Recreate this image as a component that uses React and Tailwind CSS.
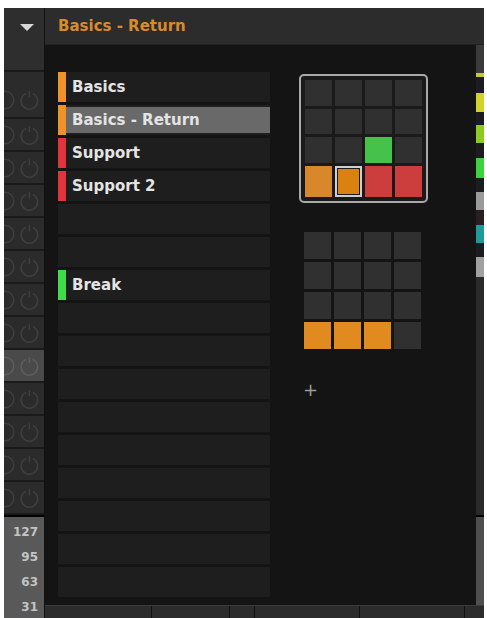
import React from "react";

const font = { fontFamily: '"DejaVu Sans", "Liberation Sans", sans-serif' };

const listRows = [
  { name: "Basics", color: "bg-[#f0922a]" },
  { name: "Basics - Return", color: "bg-[#f0922a]", active: true },
  { name: "Support", color: "bg-[#e0353d]" },
  { name: "Support 2", color: "bg-[#e0353d]" },
  {},
  {},
  { name: "Break", color: "bg-[#3fdc4a]" },
  {},
  {},
  {},
  {},
  {},
  {},
  {},
  {},
  {},
];

const grid1 = [
  "d", "d", "d", "d",
  "d", "d", "d", "d",
  "d", "d", "g", "d",
  "o", "s", "r", "r",
];

const grid2 = [
  "d", "d", "d", "d",
  "d", "d", "d", "d",
  "d", "d", "d", "d",
  "o", "o", "o", "d",
];

const padColor = {
  d: "bg-[#303030]",
  g: "bg-[#46c24b]",
  o: "bg-[#d8872a]",
  r: "bg-[#cc3d3d]",
};

const Knobs = ({ lit }) => {
  const c = lit ? "#5e5e5e" : "#3f3f3f";
  return (
    <svg width="41" height="22" viewBox="0 0 41 22">
      <circle cx="1" cy="11" r="9" fill="none" stroke={c} strokeWidth="1.5" />
      <path d="M22.5 4.2 A8.5 8.5 0 1 0 29.5 4.2" fill="none" stroke={c} strokeWidth="1.5" />
      <line x1="26" y1="2" x2="26" y2="8" stroke={c} strokeWidth="1.5" />
    </svg>
  );
};

const KnobRow = ({ tall, lit }) => (
  <div
    className={`flex ${tall ? "h-[47px] items-end pb-[6px]" : "h-[33px] items-center"} border-b-2 border-[#1a1a1a] ${
      lit ? "bg-[#4a4a4a]" : "bg-[#2b2b2b]"
    }`}
  >
    <Knobs lit={lit} />
  </div>
);

const stripParts = [
  ["h-[28px]", "bg-[#3a3a3a]"],
  ["h-[4px]", "bg-[#c9c82a]"],
  ["h-[16px]", "bg-[#1c1b20]"],
  ["h-[19px]", "bg-[#d2d22a]"],
  ["h-[13px]", "bg-[#1c1b20]"],
  ["h-[18px]", "bg-[#8ccc1e]"],
  ["h-[15px]", "bg-[#1c1b20]"],
  ["h-[20px]", "bg-[#3cd23c]"],
  ["h-[14px]", "bg-[#1c1b20]"],
  ["h-[18px]", "bg-[#9a9a9a]"],
  ["h-[15px]", "bg-[#2a1e20]"],
  ["h-[18px]", "bg-[#1e9a9a]"],
  ["h-[14px]", "bg-[#1c1b20]"],
  ["h-[20px]", "bg-[#a0a0a0]"],
];

export default function App() {
  return (
    <div className="w-[487px] h-[618px] bg-white pt-[8px] pl-[4px] pr-[3px] overflow-hidden" style={font}>
      <div className="flex h-[610px]">
        {/* left column */}
        <div className="w-[41px] flex flex-col border-r border-[#111]">
          <div className="h-[64px] bg-[#2e2e2e] border-b-2 border-[#1a1a1a] flex justify-center pt-[16px]">
            <div className="w-0 h-0 border-l-[7px] border-r-[7px] border-t-[7px] border-l-transparent border-r-transparent border-t-[#d8d8d8] ml-[6px]" />
          </div>
          <KnobRow tall />
          {Array.from({ length: 12 }).map((_, i) => (
            <KnobRow key={i} lit={i === 7} />
          ))}
          <div className="flex-1 bg-[#595959] border-t-2 border-black flex flex-col items-end pr-[6px] pt-[6px] gap-[7px] text-[12px] font-bold text-[#c4c4c4] leading-[18px]">
            <span>127</span>
            <span>95</span>
            <span>63</span>
            <span>31</span>
          </div>
        </div>

        {/* main */}
        <div className="flex-1 flex flex-col">
          <div className="h-[37px] bg-[#2c2c2c] flex items-center pl-[13px] border-b border-[#222]">
            <span className="text-[15px] font-bold text-[#d98a2c]">Basics - Return</span>
          </div>

          <div className="flex h-[560px]">
            <div className="flex-1 bg-[#141414] flex pl-[13px] pt-[27px]">
              {/* list */}
              <div className="w-[212px] flex flex-col">
                {listRows.map((r, i) => (
                  <div key={i} className="h-[33px] flex border-b-[3px] border-[#141414] bg-[#1e1e1e]">
                    <div className={`w-[8px] ${r.color || "bg-[#1e1e1e]"}`} />
                    <div className="flex-1 flex items-center py-[2px]">
                      <div
                        className={`h-full flex-1 flex items-center pl-[6px] text-[15px] font-bold text-[#e4e4e4] ${
                          r.active ? "bg-[#696969]" : ""
                        }`}
                      >
                        {r.name}
                      </div>
                    </div>
                  </div>
                ))}
              </div>

              {/* pads */}
              <div className="flex flex-col pl-[29px] pt-[2px]">
                <div className="w-[129px] h-[129px] border-2 border-[#a9a9a9] rounded-[5px] bg-[#1a1a1a] p-[4px] grid grid-cols-4 gap-[3px]">
                  {grid1.map((c, i) =>
                    c === "s" ? (
                      <div key={i} className="border-2 border-[#cfcfcf] p-[1px] bg-[#1a1a1a]">
                        <div className="w-full h-full bg-[#d9820f]" />
                      </div>
                    ) : (
                      <div key={i} className={padColor[c]} />
                    )
                  )}
                </div>

                <div className="ml-[5px] mt-[29px] w-[117px] h-[117px] grid grid-cols-4 gap-[3px]">
                  {grid2.map((c, i) => (
                    <div key={i} className={c === "o" ? "bg-[#e08a20]" : "bg-[#303030]"} />
                  ))}
                </div>

                <div className="ml-[4px] mt-[32px] text-[18px] leading-[18px] text-[#9a9a9a]">+</div>
              </div>
            </div>

            {/* right strip */}
            <div className="w-[8px] flex flex-col">
              {stripParts.map(([h, c], i) => (
                <div key={i} className={`${h} ${c}`} />
              ))}
              <div className="flex-1 bg-[#2a2a2a] border-b-2 border-black" />
              <div className="h-[88px] bg-[#4f4f4f]" />
            </div>
          </div>

          {/* bottom strip */}
          <div className="flex-1 flex bg-[#2c2c2c] border-t border-[#3c3c3c]">
            <div className="w-[4px]" />
            <div className="w-[103px] border-r border-[#111]" />
            <div className="w-[78px] border-r border-[#111]" />
            <div className="w-[25px] border-r border-[#111]" />
            <div className="w-[105px] border-r border-[#111]" />
            <div className="w-[105px] border-r border-[#111]" />
            <div className="flex-1" />
          </div>
        </div>
      </div>
    </div>
  );
}
